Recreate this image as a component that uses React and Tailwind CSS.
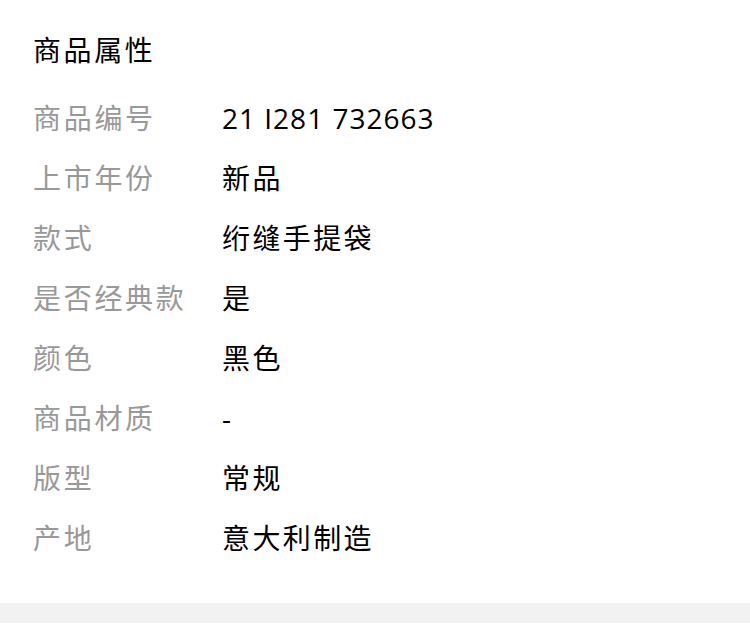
export default function App() {
  const rows = [
    ["商品编号", "21 I281 732663", true],
    ["上市年份", "新品"],
    ["款式", "绗缝手提袋"],
    ["是否经典款", "是"],
    ["颜色", "黑色"],
    ["商品材质", "-"],
    ["版型", "常规"],
    ["产地", "意大利制造"],
  ];
  return (
    <div
      className="w-[750px] h-[628px] bg-white flex flex-col"
      style={{ fontFamily: '"Open Sans", "Noto Sans CJK SC", sans-serif' }}
    >
      <div className="pl-[33px] pt-[20px] pb-[35px] flex flex-col">
        <div className="h-[60px] flex items-center text-[28px] text-black tracking-[2.6px]">
          商品属性
        </div>
        <div className="mt-[8px] flex flex-col">
          {rows.map(([k, v, num]) => (
            <div key={k} className="h-[60px] flex items-center text-[28px]">
              <div className="w-[189px] text-[#999999] tracking-[2.7px]">{k}</div>
              <div className={num ? "text-black tracking-[1px]" : "text-black tracking-[2.4px]"}>{v}</div>
            </div>
          ))}
        </div>
      </div>
      <div className="h-[20px] bg-[#f2f2f2]" />
    </div>
  );
}
